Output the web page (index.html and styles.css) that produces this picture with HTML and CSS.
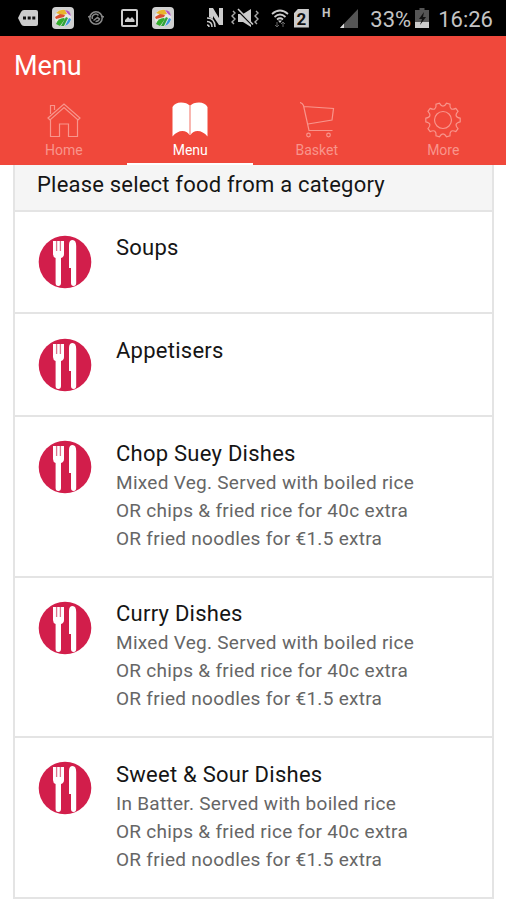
FILE: index.html
```html
<!DOCTYPE html>
<html lang="en">
<head>
    <meta charset="UTF-8">
    <meta name="viewport" content="width=device-width, initial-scale=1.0">
    <title>Menu</title>
    <link rel="stylesheet" href="styles.css">
</head>
<body>
    <svg class="sprite" width="0" height="0">
        <symbol id="cutlery" viewBox="0 0 54 54">
            <circle cx="27" cy="27" r="26.3" fill="#d21e4b"/>
            <path d="M15 6h11v13q0 3-3 4v25q0 3-2.7 3t-2.7-3V23q-2.6-1-2.6-4z" fill="#fff"/>
            <path d="M18.6 6v10M22.4 6v10" stroke="#e0748e" stroke-width="1.3"/>
            <path d="M31 10q0-5 3.6-5 3.6 0 3.6 6v37q0 3-2.6 3T33 48V33h-2z" fill="#fff"/>
        </symbol>
        <symbol id="gallery" viewBox="0 0 22 22">
            <rect width="22" height="22" rx="4" fill="#d0d0d0"/>
            <circle cx="11" cy="11" r="8.5" fill="#e8e8e8"/>
            <path d="M4 6q4-4 9-3l2 4-5 1z" fill="#e8b62c"/>
            <path d="M13 3q5 0 6 6l-3-2z" fill="#b455c0"/>
            <path d="M3 10l5-3 5 1-1 2-8 2z" fill="#d8502f"/>
            <path d="M4 17q2-6 8-6l1 1-5 7z" fill="#35ad2d"/>
            <path d="M14 10l2 1-4 8h-3z" fill="#33a23a"/>
            <path d="M17 11l2 1q-1 5-6 7z" fill="#3b94dc"/>
        </symbol>
    </svg>

    <div class="status-bar">
        <div class="notifications">
            <svg width="20" height="16" viewBox="0 0 20 16"><path d="M6 0h12q2 0 2 2v12q0 2-2 2H6q-2 0-3-2L0 8l3-6q1-2 3-2z" fill="#ccc"/><path d="M5 6.5h3v3H5zM9.7 6.5h3v3h-3zM14.3 6.5h3v3h-3z" fill="#111"/></svg>
            <svg width="22" height="22"><use href="#gallery"/></svg>
            <svg width="16" height="16" viewBox="0 0 16 16" fill="none" stroke="#888" stroke-width="1.5"><circle cx="8" cy="8" r="6.2"/><path d="M4.5 9a3.5 3.5 0 0 1 6-3.5M5.5 10.5l4-3 2 1.5q-1 2.5-4 2.5M0 7l3-1M13 6l3 1"/></svg>
            <svg width="17" height="18" viewBox="0 0 17 18"><rect x="1" y="1" width="15" height="16" rx="1" fill="none" stroke="#ccc" stroke-width="2"/><path d="M4 13v-2l3-3 2 2 2-2 2.5 3v2z" fill="#ccc"/></svg>
            <svg width="22" height="22"><use href="#gallery"/></svg>
        </div>
        <div class="indicators">
            <svg class="nfc" width="18" height="20" viewBox="0 0 18 20"><path d="M3 9V0h4l6 10V0h4v17h-4L7 8v3z" fill="#ccc"/><path d="M1 10q8 0 8 9M1 13.5q5 0 5 5.5M1 17q2 0 2 2" fill="none" stroke="#ccc" stroke-width="1.5"/></svg>
            <svg class="mute" width="28" height="20" viewBox="0 0 28 20"><path d="M7 6h5l8-5v18l-8-5H7z" fill="#ccc"/><path d="M7 2.5l14 14" stroke="#000" stroke-width="2"/><path d="M7 1l15 15.5" stroke="#ccc" stroke-width="1.6"/><path d="M2 3l2 2-3 3 3 3-3 3 2 2M25 3l2 2-3 3 3 3-3 3 2 2" fill="none" stroke="#aaa" stroke-width="1.4"/></svg>
            <svg class="wifi" width="18" height="19" viewBox="0 0 18 19"><path d="M1 5q8-7 16 0M3.5 8q5.5-5 11 0M6 10.5q3-2.5 6 0" fill="none" stroke="#ccc" stroke-width="1.7"/><path d="M7 11.5h4L9 14z" fill="#ccc"/><path d="M6 13v5M4 16l2 2 2-2M12 18v-5M10 15l2-2 2 2" fill="none" stroke="#666"/></svg>
            <span class="sim">2</span>
            <span class="network">H</span>
            <svg class="signal" width="18" height="19" viewBox="0 0 18 19"><path d="M18 0v19H0z" fill="#555"/><path d="M4 14.5V19H0z" fill="#ddd"/></svg>
            <span class="percent">33%</span>
            <svg class="battery" width="14" height="20" viewBox="0 0 14 20"><path d="M4.5 0h5v2H14v18H0V2h4.5z" fill="#555"/><path d="M0 14h14v6H0z" fill="#ccc"/><path d="M9 4l-5 7h3l-2 6 6-8H8z" fill="#111"/></svg>
            <span class="clock">16:26</span>
        </div>
    </div>

    <header class="header">
        <h1>Menu</h1>
        <nav class="tabs">
            <a class="tab">
                <svg width="36" height="36" viewBox="0 0 36 36"><path d="M2 16L18 2l16 14-2 2L18 5.5 4 18zM4.5 12V3.5h4V8M4.5 17v17.5h9V22h9v12.5h9V17"/></svg>
                <span>Home</span>
            </a>
            <a class="tab active">
                <svg width="36" height="36" viewBox="0 0 36 36"><path class="book" d="M.5 5Q3 .5 9 .5q6 0 8.500 3V33Q15 29 10.500 29 5 29 .5 34.500zM35.500 5Q33 .5 27 .5q-6 0-8.500 3V33q2.500-4 7-4 5.500 0 10 5.500z"/><path class="spine" d="M18 3v30"/></svg>
                <span>Menu</span>
            </a>
            <a class="tab">
                <svg width="36" height="36" viewBox="0 0 36 36"><path d="M1 .5Q3.5 1 4.5 3.5L10 28.5h23.5M5 4.5l29.5 2-1.5 11.5-24 4"/><circle cx="9.5" cy="33" r="1.8"/><circle cx="29.5" cy="33" r="1.8"/></svg>
                <span>Basket</span>
            </a>
            <a class="tab">
                <svg width="36" height="36" viewBox="0 0 36 36"><circle cx="18" cy="18" r="8.5"/><path d="M14.4 1.1Q18 7.3 21.6 1.1L25 2.2Q24.3 9.3 30.9 6.4L33 9.3Q28.2 14.7 35.2 16.2V19.8Q28.2 21.3 33 26.7L30.9 29.6Q24.3 26.7 25 33.8L21.6 34.9Q18 28.7 14.4 34.9L11 33.8Q11.7 26.7 5.1 29.6L3 26.7Q7.8 21.3 .8 19.8V16.2Q7.8 14.7 3 9.3L5.1 6.4Q11.7 9.3 11 2.2Z"/></svg>
                <span>More</span>
            </a>
        </nav>
    </header>

    <main class="list">
        <h2 class="list-title">Please select food from a category</h2>
        <div class="item short">
            <svg class="icon"><use href="#cutlery"/></svg>
            <div class="info"><h3>Soups</h3></div>
        </div>
        <div class="item short">
            <svg class="icon"><use href="#cutlery"/></svg>
            <div class="info"><h3>Appetisers</h3></div>
        </div>
        <div class="item">
            <svg class="icon"><use href="#cutlery"/></svg>
            <div class="info">
                <h3>Chop Suey Dishes</h3>
                <p>Mixed Veg. Served with boiled rice<br>OR chips &amp; fried rice for 40c extra<br>OR fried noodles for €1.5 extra</p>
            </div>
        </div>
        <div class="item">
            <svg class="icon"><use href="#cutlery"/></svg>
            <div class="info">
                <h3>Curry Dishes</h3>
                <p>Mixed Veg. Served with boiled rice<br>OR chips &amp; fried rice for 40c extra<br>OR fried noodles for €1.5 extra</p>
            </div>
        </div>
        <div class="item">
            <svg class="icon"><use href="#cutlery"/></svg>
            <div class="info">
                <h3>Sweet &amp; Sour Dishes</h3>
                <p>In Batter. Served with boiled rice<br>OR chips &amp; fried rice for 40c extra<br>OR fried noodles for €1.5 extra</p>
            </div>
        </div>
    </main>
</body>
</html>
```
FILE: styles.css
```css
:root {
    --red: #f0483b;
    --tab-color: #f8958c;
    --line: #e4e4e4;
}

* {
    box-sizing: border-box;
}

body {
    font-family: Roboto, sans-serif;
    margin: 0;
    height: 900px;
    overflow: hidden;
    background-color: #fff;
    color: #151515;
}

h1, h2, h3, p {
    margin: 0;
    font-weight: 400;
}

.sprite {
    display: block;
}

.status-bar {
    display: flex;
    justify-content: space-between;
    height: 36px;
    padding: 0 13px 0 18px;
    background-color: #000;
    color: #c4c4c4;
}

.notifications, .indicators {
    display: flex;
    align-items: center;
}

.notifications {
    gap: 14px;
}

.notifications svg:nth-child(3) {
    margin-right: 3px;
}

.sim {
    width: 15px;
    height: 19px;
    margin: 0 13px 0 5px;
    background-color: #ccc;
    clip-path: polygon(30% 0, 100% 0, 100% 100%, 0 100%, 0 25%);
    color: #111;
    font-size: 17px;
    font-weight: 700;
    line-height: 20px;
    text-align: center;
}

.network {
    margin: 0 10px 11px 0;
    font-size: 12px;
    font-weight: 700;
}

.mute {
    margin: 0 12px 0 7px;
}

.percent {
    margin: 2px 4px 0 12px;
    font-size: 22px;
}

.clock {
    margin: 2px 0 0 9px;
    font-size: 22px;
}

.header {
    height: 129px;
    background-color: var(--red);
}

.header h1 {
    height: 66px;
    padding: 14px 0 0 14px;
    color: #fff;
    font-size: 27px;
    line-height: 32px;
}

.tabs {
    display: grid;
    grid-template-columns: repeat(4, 1fr);
    height: 63px;
}

.tab {
    display: flex;
    flex-direction: column;
    align-items: center;
    padding-left: 1px;
    border-bottom: 2px solid transparent;
    color: var(--tab-color);
    font-size: 14px;
    line-height: 16px;
}

.tab svg {
    margin-bottom: 4px;
    fill: none;
    stroke: currentColor;
    stroke-width: 1.2;
}

.tab.active {
    border-color: #fff;
    color: #fff;
}

.tab .book {
    fill: #fff;
    stroke: none;
}

.tab .spine {
    stroke: #fac5c0;
}

.list {
    margin: 0 12px 0 13px;
    border: solid var(--line);
    border-width: 0 2px;
}

.list-title {
    height: 46.8px;
    padding: 6px 0 0 22px;
    border-bottom: 2px solid var(--line);
    background-color: #f5f5f5;
    font-size: 22px;
    line-height: 28px;
    letter-spacing: 0.2px;
}

.item {
    display: flex;
    height: 160.5px;
    padding: 22.5px 0 0 23px;
    border-bottom: 2px solid var(--line);
}

.item.short {
    height: 102.7px;
}

.icon {
    width: 54px;
    height: 54px;
    margin: 0.6px 24px 0 0;
}

.info h3 {
    font-size: 22px;
    line-height: 28px;
    letter-spacing: 0.25px;
}

.info p {
    padding-top: 1px;
    color: #666;
    font-size: 19px;
    line-height: 28px;
    letter-spacing: 0.29px;
}
```
